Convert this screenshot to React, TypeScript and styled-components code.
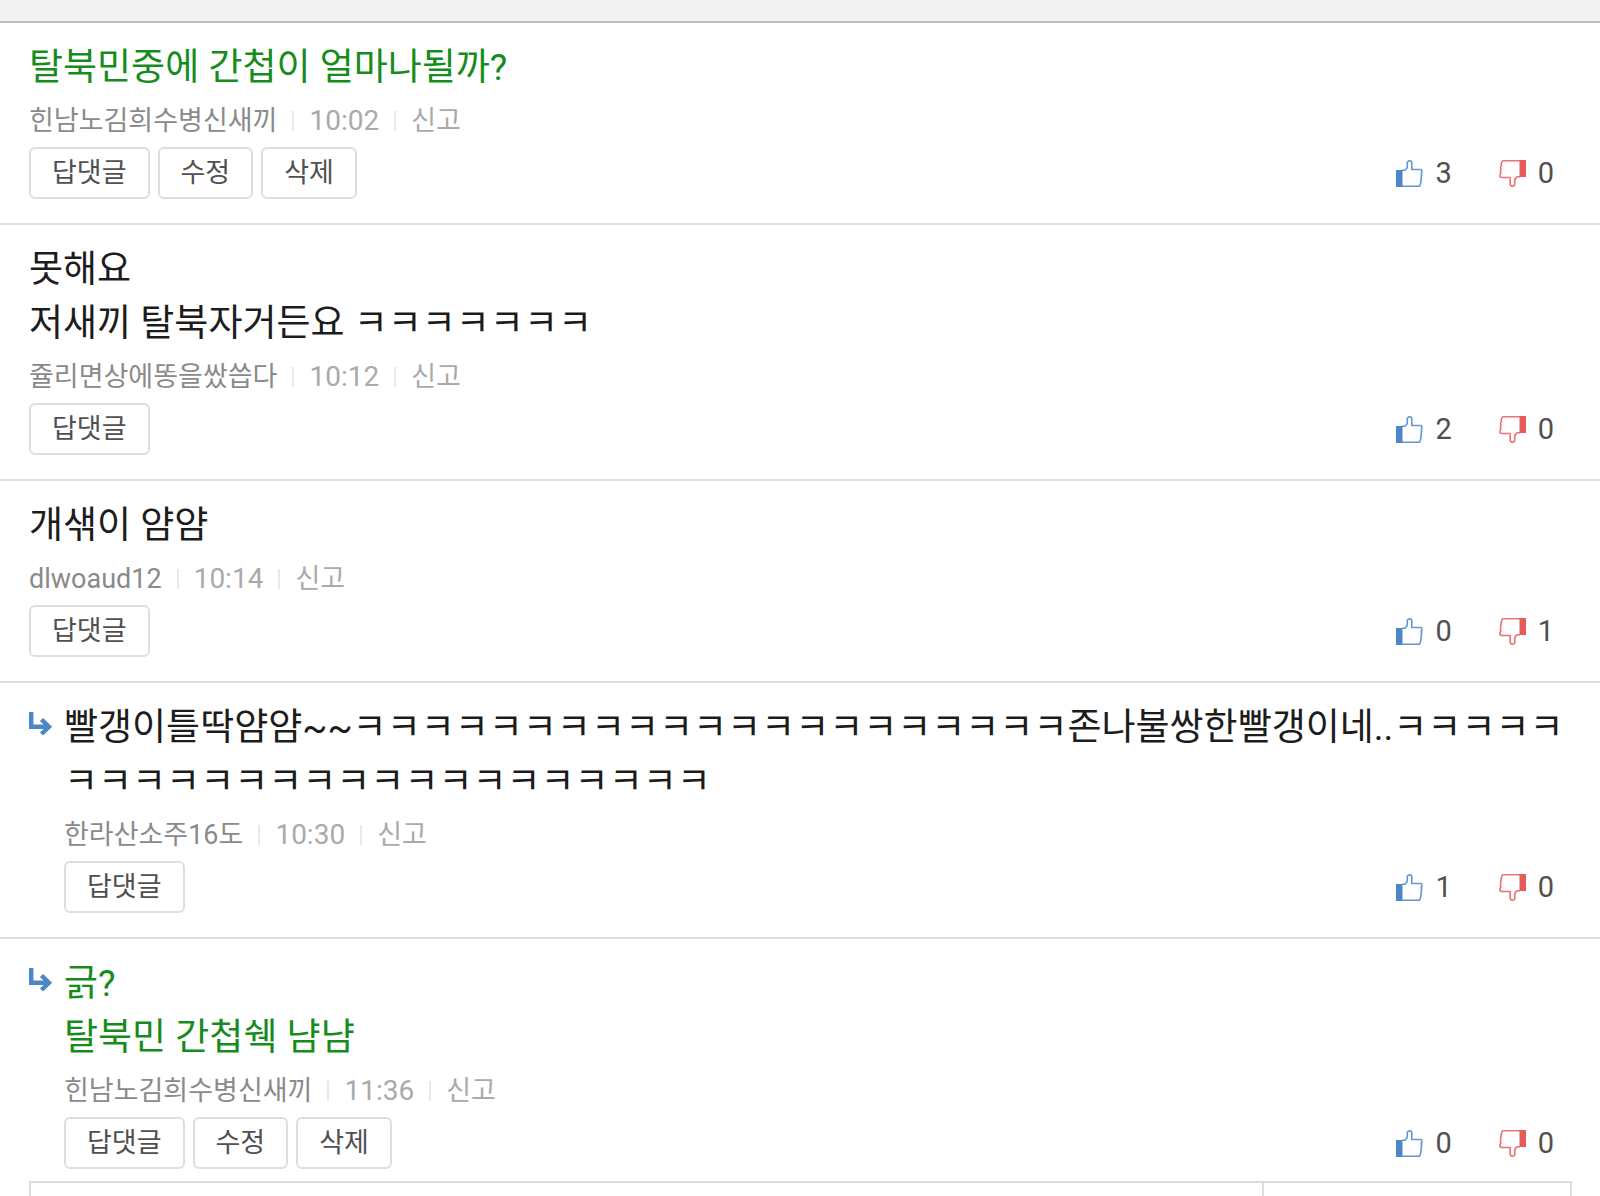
import React from "react";
import styled, { createGlobalStyle } from "styled-components";

const GlobalStyle = createGlobalStyle`
  *, *::before, *::after { box-sizing: border-box; }
  body {
    margin: 0;
    background: #fff;
    font-family: Roboto, "Noto Sans CJK KR", sans-serif;
  }
  button, textarea { font-family: inherit; }
`;

const Page = styled.main`
  display: flex;
  flex-direction: column;
  min-height: 100vh;
`;

const TopBar = styled.header`
  height: 23px;
  background: #f3f3f3;
  border-bottom: 2px solid #c0c0c0;
`;

const CommentList = styled.ul`
  margin: 0;
  padding: 0;
  list-style: none;
`;

const CommentItem = styled.li`
  display: flex;
  padding: 18px 29px 24px;
  border-bottom: 2px solid #dedede;

  &:last-child {
    padding-bottom: 12px;
    border-bottom: 0;
  }
`;

const ReplyMark = styled.div`
  flex: none;
  width: 35px;
  padding-top: 11px;

  svg { display: block; }
`;

const Body = styled.div`
  flex: 1;
  min-width: 0;
`;

const Text = styled.p<{ $mine?: boolean }>`
  margin: 0;
  font-size: 37px;
  line-height: 54px;
  white-space: pre-line;
  word-break: break-all;
  color: ${(p) => (p.$mine ? "#168c1c" : "#1c1c1c")};
`;

const Meta = styled.div`
  display: flex;
  align-items: center;
  gap: 15px;
  font-size: 27px;
  line-height: 52px;
  color: #aaa;
`;

const Author = styled.span`
  color: #8a8a8a;
`;

const Time = styled.time`
  font-size: 28px;
`;

const Divider = styled.span`
  width: 2px;
  height: 20px;
  background: #e9e9e9;
`;

const ReportLink = styled.a`
  color: inherit;
  text-decoration: none;
`;

const Footer = styled.div`
  display: flex;
  align-items: center;
  justify-content: space-between;
  padding-right: 17px;
`;

const Actions = styled.div`
  display: flex;
  gap: 8px;
`;

const ActionButton = styled.button`
  height: 52px;
  padding: 0 21px;
  border: 2px solid #dedede;
  border-radius: 6px;
  background: #fff;
  color: #505050;
  font-size: 27px;
  line-height: 48px;
  cursor: pointer;
`;

const Votes = styled.div`
  display: flex;
  gap: 47px;
`;

const VoteButton = styled.button`
  display: flex;
  align-items: center;
  gap: 12px;
  padding: 0;
  border: 0;
  background: none;
  color: #505050;
  font-size: 29px;
  line-height: 34px;
  cursor: pointer;

  svg { display: block; }
`;

const ReplyForm = styled.form`
  display: flex;
  flex: 1;
  margin: 0 28px 0 29px;
  border: 2px solid #dcdcdc;
  border-bottom: 0;
`;

const ReplyInput = styled.textarea`
  flex: 1;
  min-width: 0;
  height: auto;
  padding: 0 20px;
  border: 0;
  outline: 0;
  resize: none;
  font-size: 27px;
`;

const SubmitButton = styled.button`
  width: 20%;
  border: 0;
  border-left: 2px solid #dcdcdc;
  background: #fff;
`;

const ReplyArrow = () => (
  <svg width="24" height="24" viewBox="0 0 24 24" fill="none" stroke="#4a86c8" strokeWidth="4.4" aria-hidden="true">
    <path d="M2.200 0V14.800H19" />
    <path d="M12.500 7.500L20 14.800L12.500 22" />
  </svg>
);

const Hand = ({ color }: { color: string }) => (
  <>
    <path d="M0 10H6.500V27H0Z" fill={color} />
    <path
      d="M6 10.300H8.500C10 9.500 11.300 8 11.300 6.500V2.800C11.300 .2 15.800 .2 15.800 3V9.500H24.300Q26 9.500 26 11.200T25 13.800Q26.300 15.500 25 17.500Q26 19.500 24.600 21.300Q25.200 23 24.200 24.200Q24.200 26.200 22.500 26.200H6"
      fill="none"
      stroke={color}
      strokeOpacity="0.85"
      strokeWidth="1.6"
      strokeLinejoin="round"
    />
  </>
);

const ThumbUp = () => (
  <svg width="27" height="27" viewBox="0 0 27 27" aria-hidden="true">
    <Hand color="#4a86c8" />
  </svg>
);

const ThumbDown = () => (
  <svg width="27" height="27" viewBox="0 0 27 27" aria-hidden="true">
    <g transform="rotate(180 13.5 13.5)">
      <Hand color="#e65a5a" />
    </g>
  </svg>
);

interface Comment {
  id: number;
  text: string;
  author: string;
  time: string;
  up: number;
  down: number;
  mine?: boolean;
  reply?: boolean;
}

const comments: Comment[] = [
  { id: 1, text: "탈북민중에 간첩이 얼마나될까?", author: "힌남노김희수병신새끼", time: "10:02", up: 3, down: 0, mine: true },
  { id: 2, text: "못해요\n저새끼 탈북자거든요 ㅋㅋㅋㅋㅋㅋㅋ", author: "쥴리면상에똥을쌌씁다", time: "10:12", up: 2, down: 0 },
  { id: 3, text: "개샊이 얌얌", author: "dlwoaud12", time: "10:14", up: 0, down: 1 },
  {
    id: 4,
    text: "빨갱이틀딱얌얌~~" + "ㅋ".repeat(21) + "존나불쌍한빨갱이네.." + "ㅋ".repeat(24),
    author: "한라산소주16도",
    time: "10:30",
    up: 1,
    down: 0,
    reply: true,
  },
  { id: 5, text: "긁?\n탈북민 간첩쉑 냠냠", author: "힌남노김희수병신새끼", time: "11:36", up: 0, down: 0, mine: true, reply: true },
];

const CommentRow = ({ comment }: { comment: Comment }) => (
  <CommentItem>
    {comment.reply && (
      <ReplyMark>
        <ReplyArrow />
      </ReplyMark>
    )}
    <Body>
      <Text $mine={comment.mine}>{comment.text}</Text>
      <Meta>
        <Author>{comment.author}</Author>
        <Divider />
        <Time>{comment.time}</Time>
        <Divider />
        <ReportLink href="#report">신고</ReportLink>
      </Meta>
      <Footer>
        <Actions>
          <ActionButton type="button">답댓글</ActionButton>
          {comment.mine && <ActionButton type="button">수정</ActionButton>}
          {comment.mine && <ActionButton type="button">삭제</ActionButton>}
        </Actions>
        <Votes>
          <VoteButton type="button">
            <ThumbUp />
            {comment.up}
          </VoteButton>
          <VoteButton type="button">
            <ThumbDown />
            {comment.down}
          </VoteButton>
        </Votes>
      </Footer>
    </Body>
  </CommentItem>
);

export default function App() {
  return (
    <>
      <GlobalStyle />
      <Page>
        <TopBar />
        <CommentList>
          {comments.map((comment) => (
            <CommentRow key={comment.id} comment={comment} />
          ))}
        </CommentList>
        <ReplyForm>
          <ReplyInput rows={1} aria-label="답댓글" />
          <SubmitButton type="button" aria-label="등록" />
        </ReplyForm>
      </Page>
    </>
  );
}
